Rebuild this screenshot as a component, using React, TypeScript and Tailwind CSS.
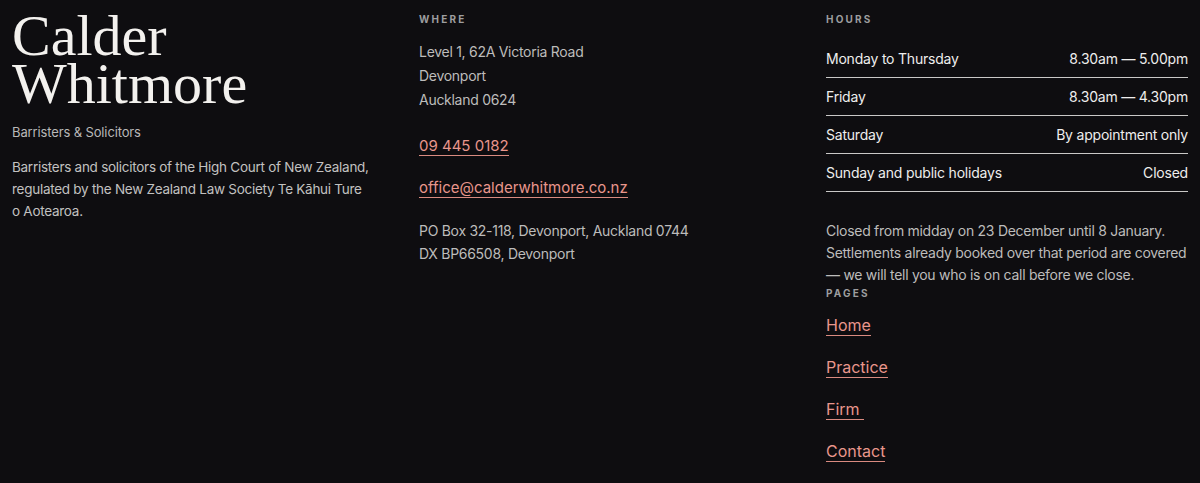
import React from "react"

const hours = [
  { day: "Monday to Thursday", time: "8.30am — 5.00pm" },
  { day: "Friday", time: "8.30am — 4.30pm" },
  { day: "Saturday", time: "By appointment only" },
  { day: "Sunday and public holidays", time: "Closed" },
]

const pages = ["Home", "Practice", "Firm\u00a0", "Contact"]

const Label = ({ children }: { children: React.ReactNode }) => (
  <h3 className="text-[10px] leading-[14px] font-bold tracking-[0.22em] uppercase text-[#9d9d9f]">{children}</h3>
)

export default function App() {
  return (
    <footer
      className="min-h-[483px] w-full bg-[#0e0d10] px-3 pt-3 antialiased"
      style={{ fontFamily: "Inter, 'Noto Sans', sans-serif" }}
    >
      <div className="grid grid-cols-3 gap-[45px]">
        {/* firm */}
        <div>
          <h1
            className="text-[58px] leading-[48px] text-[#f3f1ee]"
            style={{ fontFamily: "'Liberation Serif', 'DejaVu Serif', serif" }}
          >
            Calder
            <br />
            Whitmore
          </h1>
          <p className="mt-[14px] text-[13px] leading-5 tracking-[-0.01em] text-[#b9b8b8]">Barristers &amp; Solicitors</p>
          <p className="mt-[14px] text-[13.5px] leading-[22px] tracking-[-0.02em] text-[#c2c1c0]">
            Barristers and solicitors of the High Court of New Zealand, regulated by the New Zealand Law Society Te
            Kāhui Ture o{"\u00a0"}Aotearoa.
          </p>
        </div>

        {/* where */}
        <div>
          <Label>Where</Label>
          <div className="mt-[14px] text-[14px] leading-6 tracking-[-0.02em] text-[#bdbcbb]">
            <p>Level 1, 62A Victoria Road</p>
            <p>Devonport</p>
            <p>Auckland 0624</p>
          </div>
          <div className="mt-[25px] flex">
            <a href="#" className="border-b border-[#d98a80] text-[15px] leading-[18px] text-[#e9968c]">
              09 445 0182
            </a>
          </div>
          <div className="mt-[23px] flex">
            <a href="#" className="border-b border-[#d98a80] text-[15px] leading-[18px] text-[#e9968c]">
              office@calderwhitmore.co.nz
            </a>
          </div>
          <div className="mt-[21px] text-[14px] leading-[23px] tracking-[-0.02em] text-[#bdbcbb]">
            <p>PO Box 32-118, Devonport, Auckland 0744</p>
            <p>DX BP66508, Devonport</p>
          </div>
        </div>

        {/* hours */}
        <div>
          <Label>Hours</Label>
          <ul className="mt-[14px]">
            {hours.map((h) => (
              <li
                key={h.day}
                className="flex h-[38px] items-center justify-between border-b border-[#c9c8c7] text-[14px] tracking-[-0.015em] text-[#efeeed]"
              >
                <span>{h.day}</span>
                <span>{h.time}</span>
              </li>
            ))}
          </ul>
          <p className="mt-[28px] text-[14px] leading-[22px] tracking-[-0.02em] text-[#bdbcbb]">
            Closed from midday on 23 December until 8 January. Settlements already booked over that period are
            covered — we will tell you who is on call before we close.
          </p>
          <Label>Pages</Label>
          <nav className="mt-[15px] flex flex-col items-start gap-[21px]">
            {pages.map((p) => (
              <a
                key={p}
                href="#"
                className="border-b border-[#d98a80] text-[16px] leading-5 text-[#e9968c]"
              >
                {p}
              </a>
            ))}
          </nav>
        </div>
      </div>
    </footer>
  )
}
